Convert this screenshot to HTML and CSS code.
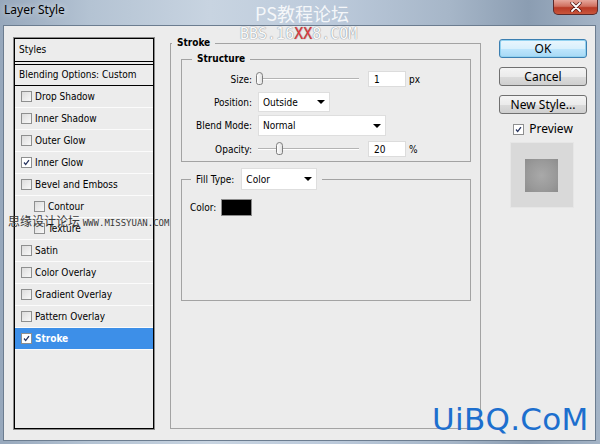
FILE: index.html
```html
<!DOCTYPE html>
<html lang="en">
<head>
  <meta charset="UTF-8">
  <title>Layer Style</title>
  <link rel="stylesheet" href="styles.css">
</head>
<body>
  <div class="window">
    <div class="titlebar">
      <span class="title">Layer Style</span>
      <div class="close">
        <svg width="16" height="10" viewBox="0 0 16 10">
          <path d="M4 1 L12 9 M12 1 L4 9" stroke="#4a1010" stroke-width="3.2" stroke-linecap="round"/>
          <path d="M4 1 L12 9 M12 1 L4 9" stroke="#fff" stroke-width="1.8" stroke-linecap="round"/>
        </svg>
      </div>
    </div>

    <div class="client">
      <!-- left: list of effects -->
      <div class="styles-list">
        <div class="list-head">Styles</div>
        <div class="list-blend">Blending Options: Custom</div>
        <div class="item"><span class="check"></span>Drop Shadow</div>
        <div class="item"><span class="check"></span>Inner Shadow</div>
        <div class="item"><span class="check"></span>Outer Glow</div>
        <div class="item"><span class="check on"><svg viewBox="0 0 11 11"><path d="M2.5 5.5 L4.5 8 L8.5 2.5" /></svg></span>Inner Glow</div>
        <div class="item"><span class="check"></span>Bevel and Emboss</div>
        <div class="item sub"><span class="check"></span>Contour</div>
        <div class="item sub"><span class="check"></span>Texture</div>
        <div class="item"><span class="check"></span>Satin</div>
        <div class="item"><span class="check"></span>Color Overlay</div>
        <div class="item"><span class="check"></span>Gradient Overlay</div>
        <div class="item"><span class="check"></span>Pattern Overlay</div>
        <div class="item selected"><span class="check on"><svg viewBox="0 0 11 11"><path d="M2.5 5.5 L4.5 8 L8.5 2.5" /></svg></span>Stroke</div>
      </div>

      <!-- middle: stroke settings -->
      <fieldset class="group stroke">
        <legend class="legend-stroke">Stroke</legend>

        <fieldset class="group structure">
          <legend class="legend-structure">Structure</legend>
          <div class="row row-size">
            <label class="lbl">Size:</label>
            <div class="slider"><span class="thumb" style="left:0%"></span></div>
            <div class="field">1</div>
            <span class="unit">px</span>
          </div>
          <div class="row row-pos">
            <label class="lbl">Position:</label>
            <div class="dropdown dd-pos"><span>Outside</span><i class="arrow"></i></div>
          </div>
          <div class="row row-blend">
            <label class="lbl">Blend Mode:</label>
            <div class="dropdown dd-blend"><span>Normal</span><i class="arrow"></i></div>
          </div>
          <div class="row row-opacity">
            <label class="lbl">Opacity:</label>
            <div class="slider"><span class="thumb" style="left:20%"></span></div>
            <div class="field">20</div>
            <span class="unit">%</span>
          </div>
        </fieldset>

        <fieldset class="group fill">
          <legend class="legend-fill">
            <span>Fill Type:</span>
            <div class="dropdown dd-fill"><span>Color</span><i class="arrow"></i></div>
          </legend>
          <div class="color-row">
            <span>Color:</span>
            <span class="swatch"></span>
          </div>
        </fieldset>
      </fieldset>

      <!-- right: buttons and preview -->
      <div class="actions">
        <button class="btn default">OK</button>
        <button class="btn">Cancel</button>
        <button class="btn">New Style...</button>
        <div class="preview-toggle">
          <span class="check on"><svg viewBox="0 0 11 11"><path d="M2.5 5.5 L4.5 8 L8.5 2.5" /></svg></span>
          <span>Preview</span>
        </div>
        <div class="preview-box"><div class="preview-swatch"></div></div>
      </div>
    </div>

    <!-- watermarks -->
    <div class="wm wm-ps">PS教程论坛</div>
    <div class="wm wm-bbs">BBS.16<span class="red">XX</span>8.COM</div>
    <div class="wm wm-missyuan">思缘设计论坛 <span>WWW.MISSYUAN.COM</span></div>
    <div class="wm wm-uibq">UiBQ.CoM</div>
  </div>
</body>
</html>
```

FILE: styles.css
```css
body {
  margin: 0;
  width: 600px;
  height: 444px;
  overflow: hidden;
  font-family: "DejaVu Sans Condensed", "Liberation Sans", sans-serif;
  font-size: 10px;
  color: #000;
}
.window {
  position: relative;
  height: 444px;
  box-sizing: border-box;
  padding: 0 4px 3px 3px;
  display: flex;
  flex-direction: column;
  background: linear-gradient(to right, #97a8bc 0%, #b4c3d3 15%, #c8d4e1 35%, #bccadb 55%, #a6b6c8 75%, #8b9db2 88%, #a4b4c6 100%);
}
.titlebar {
  height: 25px;
  display: flex;
  justify-content: space-between;
  align-items: flex-start;
}
.title {
  font-family: "Noto Sans", sans-serif;
  font-size: 12px;
  line-height: 20px;
  padding-left: 1px;
  text-shadow: 0 0 6px rgba(255, 255, 255, 0.8);
}
.close {
  width: 45px;
  height: 15px;
  margin-right: -2px;
  box-sizing: border-box;
  border: 1px solid #5b2a2a;
  border-top: none;
  border-radius: 0 0 5px 5px;
  background: linear-gradient(#e6a79c, #d0705f 45%, #b83a26 55%, #c9563c);
  display: flex;
  align-items: center;
  justify-content: center;
}

.client {
  flex: 1;
  display: flex;
  background: #ececec;
  border: 1px solid #6c7d90;
  padding: 12px 8px 11px 10px;
}

/* effects list */
.styles-list {
  width: 140px;
  box-sizing: border-box;
  border: 1px solid #000;
  box-shadow: 0 0 0 1px #8a8a8a;
}
.list-head {
  height: 22px;
  line-height: 22px;
  padding-left: 4px;
  border-bottom: 1px solid #000;
}
.list-blend {
  margin-top: 2px;
  height: 20px;
  line-height: 20px;
  padding-left: 4px;
  border-top: 1px solid #000;
  border-bottom: 1px solid #000;
}
.item {
  height: 21px;
  border-bottom: 1px solid #fbfbfb;
  display: flex;
  align-items: center;
  padding-left: 6px;
}
.item.sub {
  padding-left: 19px;
}
.item.selected {
  background: #3d8fe8;
  color: #fff;
  font-weight: bold;
}
.check {
  width: 11px;
  height: 11px;
  box-sizing: border-box;
  border: 1px solid #8e8f8f;
  background: linear-gradient(135deg, #dcdcdc, #f8f8f8);
  margin-right: 3px;
  flex: none;
  display: inline-block;
}
.check.on {
  background: #fff;
}
.check svg {
  display: block;
  width: 9px;
  height: 9px;
}
.check path {
  fill: none;
  stroke: #26335e;
  stroke-width: 1.6;
}

/* group boxes */
.group {
  margin: 0;
  border: 1px solid #a3a3a3;
  min-width: 0;
}
.group legend {
  line-height: 10px;
  font-weight: bold;
}
.stroke {
  width: 311px;
  box-sizing: border-box;
  margin-left: 16px;
  padding: 6px 9px 0 10px;
}
.legend-stroke {
  padding: 0 5px;
  margin-left: -9px;
}
.structure {
  padding: 7px 0 4px 0;
}
.legend-structure {
  padding: 0 5px;
  margin-left: 10px;
}
.row {
  display: flex;
  align-items: center;
}
.lbl {
  width: 70px;
  text-align: right;
  margin-right: 6px;
}
.row-size, .row-opacity {
  height: 16px;
}
.row-pos {
  height: 20px;
  margin-top: 5px;
}
.row-blend {
  height: 21px;
  margin-top: 3px;
}
.row-opacity {
  margin-top: 5px;
}
.slider {
  position: relative;
  width: 101px;
  height: 2px;
  border-top: 1px solid #b4b4b4;
  border-bottom: 1px solid #fff;
  box-sizing: border-box;
}
.thumb {
  position: absolute;
  top: -7px;
  width: 7px;
  height: 13px;
  margin-left: -2px;
  box-sizing: border-box;
  border: 1px solid #7d7d7d;
  border-radius: 4px 4px 3px 3px;
  background: linear-gradient(to right, #fff, #e2e2e2);
}
.field {
  width: 38px;
  height: 16px;
  box-sizing: border-box;
  margin-left: 9px;
  background: #fff;
  border: 1px solid #dcdcdc;
  padding-left: 5px;
  line-height: 15px;
}
.unit {
  margin-left: 3px;
}
.dropdown {
  height: 100%;
  box-sizing: border-box;
  background: #fff;
  border: 1px solid #dedede;
  display: flex;
  align-items: center;
  justify-content: space-between;
  padding: 0 4px 0 4px;
  font-weight: normal;
}
.arrow {
  width: 0;
  height: 0;
  border-left: 4px solid transparent;
  border-right: 4px solid transparent;
  border-top: 4px solid #000;
}
.dd-pos {
  width: 72px;
}
.dd-blend {
  width: 128px;
}
.fill {
  margin-top: 6px;
  padding: 9px 0 84px 8px;
}
.legend-fill {
  margin-left: 1px;
  padding: 0 5px;
  display: flex;
  align-items: center;
}
.group .legend-fill {
  font-weight: normal;
  line-height: 13px;
}
.dd-fill {
  width: 76px;
  height: 22px;
  margin-left: 7px;
}
.color-row {
  display: flex;
  align-items: center;
  height: 17px;
}
.swatch {
  width: 31px;
  height: 17px;
  box-sizing: border-box;
  margin-left: 5px;
  background: #000;
  border: 1px solid #8c8c8c;
}

/* buttons and preview */
.actions {
  width: 88px;
  margin-left: 18px;
  display: flex;
  flex-direction: column;
  align-items: center;
}
.btn {
  width: 88px;
  height: 19px;
  margin: 9px 0 0 0;
  padding: 0;
  font-family: "Noto Sans", sans-serif;
  font-size: 12px;
  line-height: 16px;
  color: #000;
  border: 1px solid #707070;
  border-radius: 3px;
  background: linear-gradient(#f4f4f4, #ebebeb 50%, #dbdbdb 51%, #cfcfcf);
}
.btn.default {
  margin-top: 1px;
  border-color: #3c7fb1;
  background: linear-gradient(#eaf6fd, #d9f0fc 50%, #bee6fd 51%, #a7d9f5);
  box-shadow: inset 0 0 0 1px #92d2f0;
}
.preview-toggle {
  margin-top: 9px;
  display: flex;
  align-items: center;
  font-family: "Noto Sans", sans-serif;
  font-size: 12px;
  line-height: 12px;
}
.preview-toggle .check {
  margin-right: 5px;
}
.preview-box {
  margin-top: 7px;
  margin-right: 3px;
  width: 64px;
  height: 66px;
  box-sizing: border-box;
  background: #d9d9d9;
  border: 1px solid #e6e6e6;
  display: flex;
  align-items: center;
  justify-content: center;
}
.preview-swatch {
  width: 33px;
  height: 33px;
  background: radial-gradient(#a9a9a9, #9a9a9a 60%, #8d8d8d);
}

/* watermarks */
.wm {
  position: absolute;
  white-space: nowrap;
}
.wm-ps {
  left: 255px;
  top: 1px;
  font-family: "Noto Sans CJK SC", sans-serif;
  font-size: 18px;
  line-height: 24px;
  color: rgba(255, 255, 255, 0.85);
}
.wm-bbs {
  left: 240px;
  top: 26px;
  font-family: "DejaVu Sans Mono", monospace;
  font-size: 15px;
  line-height: 16px;
  color: #fafafa;
  text-shadow: 0 0 1px #8a929c, 0 0 1px #8a929c;
}
.wm-bbs .red {
  color: #e23a3a;
}
.wm-missyuan {
  left: 8px;
  top: 213px;
  font-family: "Noto Sans CJK SC", sans-serif;
  font-size: 12px;
  line-height: 16px;
  color: #3a3a3a;
}
.wm-missyuan span {
  font-family: "DejaVu Sans Mono", monospace;
  font-size: 9px;
}
.wm-uibq {
  left: 432px;
  top: 402px;
  font-family: "DejaVu Sans", sans-serif;
  font-size: 31px;
  line-height: 34px;
  letter-spacing: 0.3px;
  color: #1d6fce;
}
```
